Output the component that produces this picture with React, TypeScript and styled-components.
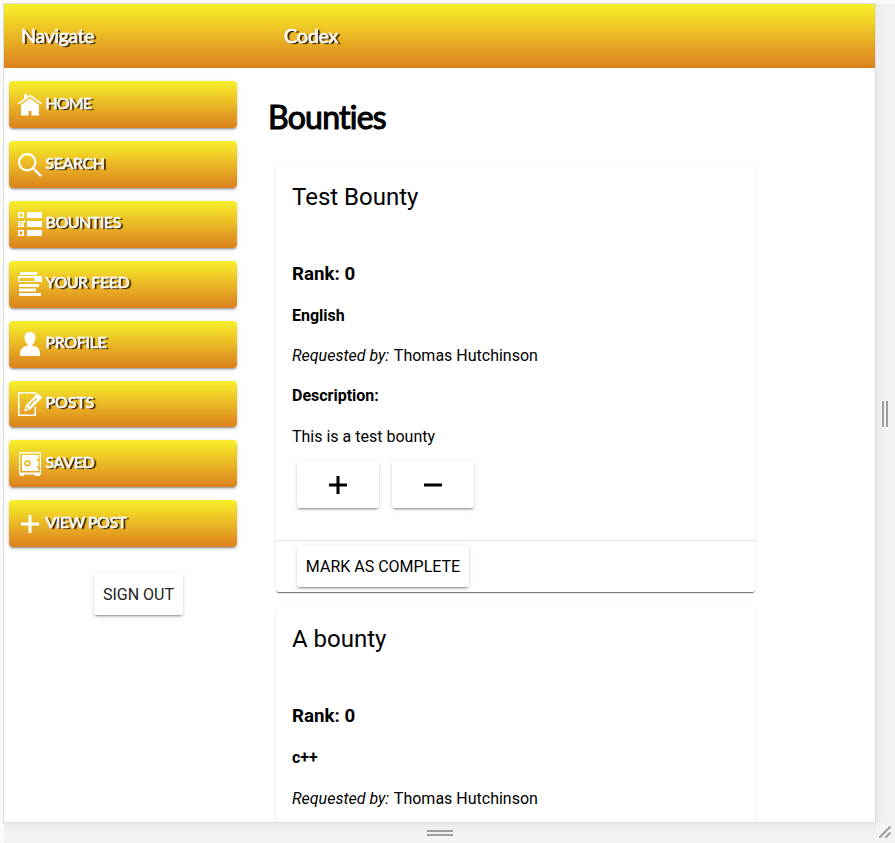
import React from 'react';
import styled, { createGlobalStyle } from 'styled-components';

const Global = createGlobalStyle`
  * { box-sizing: border-box; }
  html, body { margin: 0; background: #fafafa; overflow: hidden; }
  body { font-family: Roboto, sans-serif; font-size: 16px; color: #000; }
  h1, h2, h3, p { margin: 0; }
`;
const gold = 'linear-gradient(#f8f02a, #dc801f)';
const raised = '0 3px 1px -2px rgba(0,0,0,.2), 0 2px 2px rgba(0,0,0,.14), 0 1px 5px rgba(0,0,0,.12)';

const Viewport = styled.div`
  display: grid; grid-template: 820px 20px / 873px 19px;
  width: 895px; height: 843px; padding: 3px 0 0 3px;
`;
const Page = styled.div`
  border: 1px solid #dadce0; background: #fff; overflow: hidden;
  display: flex; flex-direction: column;
`;
const RightRail = styled.div`
  background: linear-gradient(90deg, #ececec, #f3f3f3 14px); margin-top: 1px;
  display: flex; align-items: center; justify-content: center; padding: 1px 2px 0 0;
`;
const BottomRail = styled.div`
  background: linear-gradient(#ebebeb, #f3f3f3 14px); margin-left: 1px;
  display: flex; align-items: center; justify-content: center;
`;
const Corner = styled.div`
  background: #f3f3f3; display: flex; align-items: center; justify-content: center; padding: 0 1px 2px 0;
`;
const Header = styled.header`
  flex: none; height: 64px; display: grid; grid-template-columns: 263px 1fr;
  align-items: center; padding: 0 0 2px 17px; background: ${gold};
`;
const HeaderText = styled.span<{ $spacing: number }>`
  font: 400 20px/24px Lato, sans-serif; color: #fff; -webkit-text-stroke: .5px #fff;
  letter-spacing: ${p => p.$spacing}px; text-shadow: 2px 1px 1px #000;
`;
const Columns = styled.div`display: grid; grid-template-columns: 264px 1fr;`;
const Sidebar = styled.nav`
  width: 238px; padding: 13.3px 5px 0; display: flex; flex-direction: column; gap: 13px;
`;
const NavButton = styled.button`
  width: 228px; height: 46.86px; padding: 0 9px; border: 0; border-radius: 4px;
  display: flex; align-items: center; background: ${gold};
  box-shadow: ${raised};
`;
const NavIcon = styled.svg`width: 24px; height: 24px; flex: none; fill: #fff; margin: 0 3.5px 0 0;`;
const NavLabel = styled.span<{ $spacing: number }>`
  font: 400 16px/20px Lato, sans-serif; letter-spacing: ${p => p.$spacing}px;
  -webkit-text-stroke: .5px #fff;
  color: #fff; text-shadow: 2px 1px 1px #000; margin-top: -4px; white-space: nowrap;
`;
const Plain = styled.button<{ $w: number; $h: number }>`
  width: ${p => p.$w}px; height: ${p => p.$h}px; padding: 0; border: 0; border-radius: 3px;
  background: #fff; color: #000; font: 400 16px Roboto, sans-serif; white-space: nowrap;
  box-shadow: ${raised}; display: flex; align-items: center; justify-content: center;
`;
const SignOut = styled(Plain)`margin: 12.700px 0 0 85px; padding-top: 1px; color: #222;`;
const Main = styled.main`padding: 30px 0 0 0;`;
const Title = styled.h1`
  font: 400 32px/38px Lato, sans-serif; letter-spacing: -.75px; -webkit-text-stroke: 1.1px #000;
`;
const Cards = styled.div`padding: 30px 0 0 8px; display: flex; flex-direction: column; gap: 16px;`;
const Card = styled.article`
  width: 479px; height: 426px; border-radius: 3px; background: #fff;
  box-shadow: 0 2px 1px -1px rgba(0,0,0,.4), 0 1px 1px rgba(0,0,0,.14), 0 1px 2px rgba(0,0,0,.16);
  display: flex; flex-direction: column;
`;
const CardBody = styled.div`flex: 1; padding: 15px 16px 0;`;
const CardTitle = styled.h2`font-size: 24px; font-weight: 400; line-height: 32px;`;
const Rank = styled.h3`font-size: 18.72px; font-weight: 700; line-height: 22px; margin-top: 50px;`;
const Line = styled.p<{ $bold?: boolean; $gap: number }>`
  font-weight: ${p => (p.$bold ? 700 : 400)}; line-height: 20px; margin-top: ${p => p.$gap}px;
`;
const Requester = styled.em`margin-right: 1px;`;
const Votes = styled.div`display: flex; gap: 13px; padding: 14px 0 0 5px;`;
const Actions = styled.footer`height: 52px; border-top: 1px solid #e4e4e4; padding: 5px 0 0 21px;`;

const icons: Record<string, React.ReactNode> = {
  home: <path d="M6 1h3v3l3-2.4L24 10l-1 1.4L12 3.4 1 11.4 0 10l6-4.300zM3 12l9-6.700 9 6.700v10.500h-7.500V18h-3v4.500H3z" />,
  search: <path fillRule="evenodd" d="M9.200 0a9.200 9.200 0 0 1 7.200 14.900L24 22.300 22.300 24l-7.500-7.500A9.200 9.200 0 1 1 9.200 0zm0 2.200a7 7 0 1 0 0 14 7 7 0 0 0 0-14z" />,
  bounties: <>
    <path fillRule="evenodd" d="M0 0h6v6H0zM1.5 1.5v3h3v-3zM0 18h6v6H0zM1.5 19.5v3h3v-3zM9 0h15v6H9zM9 9h15v6H9zM9 18h15v6H9z" />
    <path d="M0 9h5v1.2H1.3v3.5h3.4V12H6v3H0zM1.7 10.7l1.6 1L6.7 8 8 9l-4.4 4.5-2-1.2z" />
  </>,
  feed: <path fillRule="evenodd" d="M2 0h17v3H2zM0 4h24v6H0zM1.2 6v3h15.300V6zM1 12h20v3H1zM1 16.500h17v3H1zM1 21h22v3H1z" />,
  profile: <path d="M12 0c4 0 5.800 2.700 5.400 6.400-.2 2.600-1.500 4.800-3 6v1.300c3.800.8 8 .9 7.700 10.300H2c-.3-9.400 3.900-9.500 7.600-10.300v-1.300c-1.500-1.200-2.800-3.400-3-6C6.200 2.700 8 0 12 0z" />,
  posts: <>
    <path d="M0 0h18v2l-1.500 1.500v-2h-15v21h15v-7L18 14v10H0z" />
    <path fillRule="evenodd" d="M19.200 1.800c1-.7 4.800 2.800 4.800 4L12.500 17.200 6 19.500 8 13zM18.200 5.800l-7.700 7.700 1 1 7.700-7.700zM9 14.800l-1 2.700 2.700-1z" />
  </>,
  saved: <path fillRule="evenodd" d="M1 0h22v22.500h-1V24h-5v-1.500H6V24H2v-1.500H1zM2.200 1.400v19.200h19.600V1.400zM4 3h16.500v4H19v2h1.500v5.500H19v2h1.500V19H4zM9.500 8a3.200 3.200 0 1 0 0 6.400 3.200 3.200 0 0 0 0-6.400zm0 1.700a1.500 1.500 0 1 1 0 3 1.500 1.500 0 0 1 0-3z" />,
  view: <path d="M10.500 3h3v7.500H21v3h-7.500V21h-3v-7.500H3v-3h7.500z" />,
};
const links: [string, string, number][] = [
  ['home', 'HOME', -.9], ['search', 'SEARCH', -.4], ['bounties', 'BOUNTIES', -.45],
  ['feed', 'YOUR FEED', -.45], ['profile', 'PROFILE', -.35], ['posts', 'POSTS', -.1],
  ['saved', 'SAVED', -.35], ['view', 'VIEW POST', -.5],
];

function Bounty({ title, language, text }: { title: string; language: string; text: string }) {
  return (
    <Card>
      <CardBody>
        <CardTitle>{title}</CardTitle>
        <Rank>Rank: 0</Rank>
        <Line $bold $gap={21}>{language}</Line>
        <Line $gap={20}><Requester>Requested by:</Requester> Thomas Hutchinson</Line>
        <Line $bold $gap={20}>Description:</Line>
        <Line $gap={21}>{text}</Line>
        <Votes>
          <Plain $w={82} $h={47}><svg width="18" height="18"><path d="M9 0v18M0 9h18" stroke="#000" strokeWidth="3" /></svg></Plain>
          <Plain $w={82} $h={47}><svg width="18" height="18"><path d="M0 9h18" stroke="#000" strokeWidth="3" /></svg></Plain>
        </Votes>
      </CardBody>
      <Actions><Plain $w={172} $h={41}>MARK AS COMPLETE</Plain></Actions>
    </Card>
  );
}

function PartialBounty({ title, language }: { title: string; language: string }) {
  return (
    <Card>
      <CardBody>
        <CardTitle>{title}</CardTitle>
        <Rank>Rank: 0</Rank>
        <Line $bold $gap={21}>{language}</Line>
        <Line $gap={21}><Requester>Requested by:</Requester> Thomas Hutchinson</Line>
      </CardBody>
    </Card>
  );
}

export default function App() {
  return (
    <>
      <Global />
      <Viewport>
        <Page>
          <Header>
            <HeaderText $spacing={-.6}>Navigate</HeaderText>
            <HeaderText $spacing={-.4}>Codex</HeaderText>
          </Header>
          <Columns>
            <Sidebar>
              {links.map(([icon, label, spacing]) => (
                <NavButton key={icon}>
                  <NavIcon viewBox="0 0 24 24">{icons[icon]}</NavIcon>
                  <NavLabel $spacing={spacing}>{label}</NavLabel>
                </NavButton>
              ))}
              <SignOut $w={89} $h={42}>SIGN OUT</SignOut>
            </Sidebar>
            <Main>
              <Title>Bounties</Title>
              <Cards>
                <Bounty title="Test Bounty" language="English" text="This is a test bounty" />
                <PartialBounty title="A bounty" language="c++" />
              </Cards>
            </Main>
          </Columns>
        </Page>
        <RightRail><svg width="6" height="26"><path d="M1 0v26M5 0v26" stroke="#9e9e9e" strokeWidth="2" /></svg></RightRail>
        <BottomRail><svg width="26" height="6"><path d="M0 1h26M0 5h26" stroke="#9e9e9e" strokeWidth="2" /></svg></BottomRail>
        <Corner><svg width="12" height="12"><path d="M1 11 11 1M7 11l4-4" stroke="#9e9e9e" strokeWidth="2" strokeLinecap="round" /></svg></Corner>
      </Viewport>
    </>
  );
}
